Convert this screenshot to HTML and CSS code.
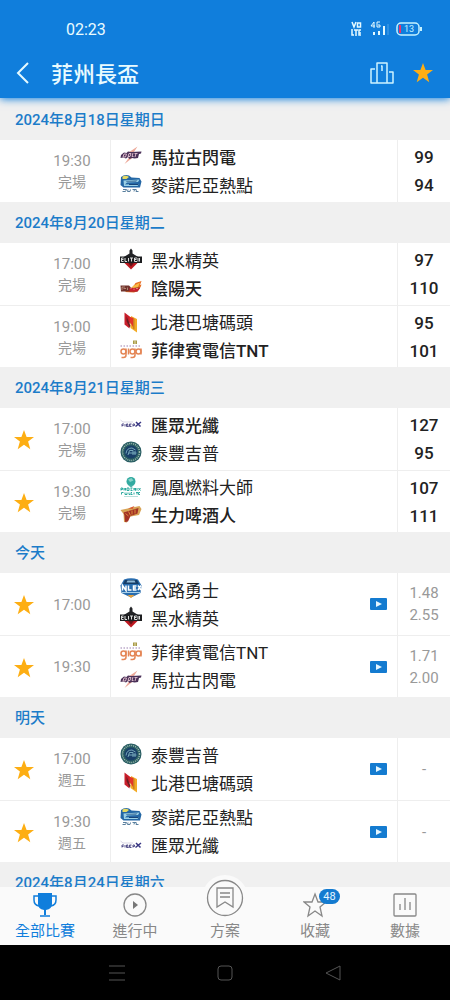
FILE: index.html
```html
<!DOCTYPE html>
<html lang="zh-Hant">
<head>
<meta charset="utf-8">
<meta name="viewport" content="width=device-width, initial-scale=1">
<title>菲州長盃</title>
<link rel="stylesheet" href="styles.css">
</head>
<body>
<svg class="sprite" aria-hidden="true">
  <symbol id="star" viewBox="0 0 22 22"><path fill="#fdae13" d="M11 1l2.6 7h7.4l-5.9 4.6 2.2 7.6L11 15.8l-6.3 4.4 2.2-7.6L1 8h7.400z"/></symbol>
  <symbol id="play" viewBox="0 0 17 12"><rect width="17" height="12" rx="1" fill="#147bd0"/><path fill="#e4f6ff" d="M6 3l6 3-6 3z"/></symbol>
  <symbol id="bolts" viewBox="0 0 44 44">
    <path fill="#edaa9b" d="M35 3L17 15l5 4-13 19 22-17-5-4z"/>
    <path fill="#4b3158" d="M2 20l6-5 5 1 3-3 6 1 21-1-1 4-4 1-2 8-7 1-5-1-5 2-3-4-4 3-6-2-5 1z"/>
    <path fill="none" stroke="#d9b8c8" stroke-width="2" d="M8 18l-2 6h5l2-6zM18 17h4l-2 6h-4zM26 16l-2 7h3M29 17h6m-3 0l-2 7"/>
  </symbol>
  <symbol id="hot" viewBox="0 0 44 44">
    <path fill="#2467a5" d="M2 8q7-6 16-3l5 4 16 1 4 7-3 12H7l-6-5z"/>
    <path fill="#e5d963" d="M5 7q7-3 13 1l-5 4H5z"/>
    <path fill="#9bd1e6" d="M7 15l32-2-3 5-22 1-4 4 28-1-3 4H8z"/>
    <path fill="#174579" d="M13 16l22-1-3 2H12zM18 22h20l-2 2H18z"/>
    <path fill="none" stroke="#587e9d" stroke-width="2" d="M6 33h7l-2 4H5m11-4l-1 4h5l1-4m4 0h7m-3 0l-1 4m5-4l-1 4h5"/>
  </symbol>
  <symbol id="elite" viewBox="0 0 44 44">
    <path fill="#222326" d="M22 1l3 4v6l13 8H6l13-8V5z"/>
    <path fill="#bd1820" d="M6 27h32L22 43z"/><path fill="#5f1419" d="M14 27h16l-8 10z"/>
    <path fill="#1d1e20" d="M0 17h44v13H0z"/>
    <path stroke="#ddd" stroke-width="2" fill="none" d="M7 20H3v7h4M3 23h4m3-3v7h4m3-7v7m3-7h6m-3 0v7m11-7h-5v7h5m-5-4h4m3-3v7m3-7v7"/>
  </symbol>
  <symbol id="rain" viewBox="0 0 44 44">
    <path fill="#e86c20" d="M16 26q10-2 15-12l12-4-3 8 3-1q-3 13-15 16L10 32z"/>
    <path fill="#f8bb45" d="M26 20l14-7-4 9-13 4z"/>
    <path fill="#71332c" d="M1 19h17l5 5 17-1-5 8H2z"/>
    <path fill="#c91f2b" d="M19 24h21l-5 7H19z"/>
    <path stroke="#f2d8bd" stroke-width="1" fill="none" d="M4 22v6m0-6h6m-3 3h5m3-2v5m5-4h4m4 1v3m4-3h4"/>
  </symbol>
  <symbol id="north" viewBox="0 0 44 44">
    <path fill="#c91e2b" d="M9 3l13 10v13l-3-3v12L9 27z"/>
    <path fill="#f2aa24" d="M22 18V10l12 6v27L21 34V19z"/>
    <path fill="#6b1c22" d="M13 10l8 20-2 3-6-13z"/>
    <path fill="#e3342b" d="M19 12l8 2v20l-8-14z"/><path fill="#c97a20" d="M27 14l2 3v20l-3-2z"/>
  </symbol>
  <symbol id="giga" viewBox="0 0 44 44">
    <path fill="#a79b48" d="M26 3h8v7h-8z"/><path fill="#e6d9ad" d="M29 3h2v7h-2z"/>
    <path stroke="#9b7faf" stroke-width="2" stroke-dasharray="3 3" d="M1 14h42"/>
    <g fill="none" stroke="#e48656" stroke-width="3"><circle cx="7" cy="25" r="5"/><path d="M12 19v13q0 5-5 5H3M17 19v12"/><circle cx="25" cy="25" r="5"/><path d="M30 19v13q0 5-5 5h-4"/><circle cx="37" cy="25" r="5"/><path d="M42 19v12"/></g>
  </symbol>
  <symbol id="fiber" viewBox="0 0 44 44">
    <path fill="none" stroke="#b1accb" stroke-width="1" d="M1 14l5 4h20"/>
    <path fill="none" stroke="#55508b" stroke-width="2" d="M4 27v-5h4m-4 3h3m3-3v5m3 0v-5h3l-1 2 2 3h-4m10-5h-4v5h4m-4-3h3m4 3v-5h3v3h-3"/>
    <path fill="none" stroke="#393784" stroke-width="3" d="M32 18l9 9m1-9l-11 9"/>
  </symbol>
  <symbol id="terra" viewBox="0 0 44 44">
    <circle cx="22" cy="22" r="21" fill="#285c62"/><circle cx="22" cy="22" r="17" fill="none" stroke="#9dbbae" stroke-width="3" stroke-dasharray="2 2"/>
    <circle cx="22" cy="22" r="13" fill="#193f69"/>
    <path fill="none" stroke="#77a9ba" stroke-width="2" d="M12 25q1-11 12-11l7 4M16 28l3-9h7v9m-8-4h15M30 20v8"/>
  </symbol>
  <symbol id="phoenix" viewBox="0 0 44 44">
    <circle cx="22" cy="11" r="9" fill="#32aaa0"/><path fill="#87d2c8" d="M16 7l7-3 4 5-7 3z"/>
    <path fill="none" stroke="#42aea4" stroke-width="2" d="M17 18l5 4 5-4"/>
    <path fill="none" stroke="#2ca99e" stroke-width="2" d="M2 29v-5h3v3H2m6-3v5m0-3h3m0-2v5m3-5v5h4v-5zm7 0h4m-4 2h3m-3 3h4m3 0v-5l3 5v-5m3 0v5m3-5l4 5m0-5l-4 5M3 37v-4h4m3 0v4h4v-4m4 0v4h3m3-4h-2v4h3m3-4v4m4-4h4m-2 0v4m6-4h-3v4h3"/>
    <path stroke="#75bdb5" d="M8 41h28"/>
  </symbol>
  <symbol id="beer" viewBox="0 0 44 44">
    <path fill="#d8a456" d="M1 12l38-8 4 6-5 12-22 4-2 11-6-1-1-16z"/>
    <path fill="#a33226" d="M7 17l30-9-2 11-14 5-5 11-6 1-1-13z"/>
    <path fill="none" stroke="#d88b3b" stroke-width="2" d="M11 19l6 5m0-9l4 8m3-10v8m6-10v8"/>
    <path fill="#d85a32" d="M16 9l13-5-4 6z"/>
  </symbol>
  <symbol id="nlex" viewBox="0 0 44 44">
    <path fill="#286cae" d="M8 3q14-5 28 0l7 12-2 15-19 9-19-9L1 15z"/>
    <path fill="#e6a13d" d="M15 34h14l-7 6z"/><path fill="#163c66" d="M10 4h24l4 8H6z"/>
    <path fill="#8eb8d6" d="M15 5h14l2 4H13z"/>
    <path fill="none" stroke="#fff" stroke-width="3" d="M5 25V15l7 10V15m5 0v9h6m10-8h-6v8h6m-6-4h5m4-5l6 9m0-9l-6 9"/>
    <path stroke="#a7cee7" stroke-width="2" d="M4 29h36"/>
  </symbol>
</svg>
<div class="app">
  <header class="top">
    <div class="status">
      <span class="clock">02:23</span>
      <svg class="status-icons" viewBox="0 0 74 18" fill="none" aria-hidden="true">
        <g stroke="#e5faff" stroke-width="1.500"><path d="M2 2l2 5 2-5"/><rect x="7.500" y="3" width="3" height="4"/><path d="M2 9v6h2M4 10h4m-2 0v6m5-6H9v5h2m-2-2h2"/><path stroke-width="1" d="M24 8V2l-3 4h4m5-4h-3v5h3V5h-2"/></g>
        <path stroke="#e5faff" stroke-width="2" d="M24 12v3m5-4v4m5-9v9"/><path stroke="#4ca2e8" d="M38 4v11"/>
        <rect x="47" y="3" width="22" height="12" rx="4" stroke="#c4f2ff" stroke-width="1.500"/>
        <path stroke="#c4f2ff" stroke-width="2" d="M71 7v4"/><path stroke="#e8316e" stroke-width="2" d="M50 5v8"/>
        <text x="54" y="12" class="digits" font-size="9" fill="#c4f2ff">13</text>
      </svg>
    </div>
    <div class="titlebar">
      <button class="icon-btn back" aria-label="返回"><svg width="14" height="22" viewBox="0 0 14 22"><path d="M12 1L2 11l10 10" fill="none" stroke="#e5faff" stroke-width="2"/></svg></button>
      <h1>菲州長盃</h1>
      <button class="icon-btn" aria-label="排名"><svg width="24" height="22" viewBox="0 0 24 22" fill="none" stroke="#cdf3ff" stroke-width="1.500" stroke-linejoin="round"><path d="M7 21V1h10v20M5 7H1v14h22V10h-4M11 4h1v5"/></svg></button>
      <button class="icon-btn" aria-label="收藏聯賽"><svg width="22" height="22"><use href="#star"/></svg></button>
    </div>
  </header>
  <main class="list">
    <h2>2024年8月18日星期日</h2>
    <article class="match">
      <div class="when"><span></span><p><time>19:30</time><small>完場</small></p></div>
      <div class="teams"><p class="win"><svg><use href="#bolts"/></svg>馬拉古閃電</p><p><svg><use href="#hot"/></svg>麥諾尼亞熱點</p></div>
      <div class="score"><b>99</b><b>94</b></div>
    </article>
    <h2>2024年8月20日星期二</h2>
    <article class="match">
      <div class="when"><span></span><p><time>17:00</time><small>完場</small></p></div>
      <div class="teams"><p><svg><use href="#elite"/></svg>黑水精英</p><p class="win"><svg><use href="#rain"/></svg>陰陽天</p></div>
      <div class="score"><b>97</b><b>110</b></div>
    </article>
    <article class="match">
      <div class="when"><span></span><p><time>19:00</time><small>完場</small></p></div>
      <div class="teams"><p><svg><use href="#north"/></svg>北港巴塘碼頭</p><p class="win"><svg><use href="#giga"/></svg>菲律賓電信TNT</p></div>
      <div class="score"><b>95</b><b>101</b></div>
    </article>
    <h2>2024年8月21日星期三</h2>
    <article class="match">
      <div class="when"><button class="icon-btn" aria-label="取消收藏"><svg width="22" height="22"><use href="#star"/></svg></button><p><time>17:00</time><small>完場</small></p></div>
      <div class="teams"><p class="win"><svg><use href="#fiber"/></svg>匯眾光纖</p><p><svg><use href="#terra"/></svg>泰豐吉普</p></div>
      <div class="score"><b>127</b><b>95</b></div>
    </article>
    <article class="match">
      <div class="when"><button class="icon-btn" aria-label="取消收藏"><svg width="22" height="22"><use href="#star"/></svg></button><p><time>19:30</time><small>完場</small></p></div>
      <div class="teams"><p><svg><use href="#phoenix"/></svg>鳳凰燃料大師</p><p class="win"><svg><use href="#beer"/></svg>生力啤酒人</p></div>
      <div class="score"><b>107</b><b>111</b></div>
    </article>
    <h2>今天</h2>
    <article class="match">
      <div class="when"><button class="icon-btn" aria-label="取消收藏"><svg width="22" height="22"><use href="#star"/></svg></button><p><time>17:00</time></p></div>
      <div class="teams"><p><svg><use href="#nlex"/></svg>公路勇士</p><p><svg><use href="#elite"/></svg>黑水精英</p></div>
      <button class="icon-btn video" aria-label="直播"><svg width="17" height="12"><use href="#play"/></svg></button>
      <div class="score odds"><span>1.48</span><span>2.55</span></div>
    </article>
    <article class="match">
      <div class="when"><button class="icon-btn" aria-label="取消收藏"><svg width="22" height="22"><use href="#star"/></svg></button><p><time>19:30</time></p></div>
      <div class="teams"><p><svg><use href="#giga"/></svg>菲律賓電信TNT</p><p><svg><use href="#bolts"/></svg>馬拉古閃電</p></div>
      <button class="icon-btn video" aria-label="直播"><svg width="17" height="12"><use href="#play"/></svg></button>
      <div class="score odds"><span>1.71</span><span>2.00</span></div>
    </article>
    <h2>明天</h2>
    <article class="match">
      <div class="when"><button class="icon-btn" aria-label="取消收藏"><svg width="22" height="22"><use href="#star"/></svg></button><p><time>17:00</time><small>週五</small></p></div>
      <div class="teams"><p><svg><use href="#terra"/></svg>泰豐吉普</p><p><svg><use href="#north"/></svg>北港巴塘碼頭</p></div>
      <button class="icon-btn video" aria-label="直播"><svg width="17" height="12"><use href="#play"/></svg></button>
      <div class="score odds"><span>-</span></div>
    </article>
    <article class="match">
      <div class="when"><button class="icon-btn" aria-label="取消收藏"><svg width="22" height="22"><use href="#star"/></svg></button><p><time>19:30</time><small>週五</small></p></div>
      <div class="teams"><p><svg><use href="#hot"/></svg>麥諾尼亞熱點</p><p><svg><use href="#fiber"/></svg>匯眾光纖</p></div>
      <button class="icon-btn video" aria-label="直播"><svg width="17" height="12"><use href="#play"/></svg></button>
      <div class="score odds"><span>-</span></div>
    </article>
    <h2>2024年8月24日星期六</h2>
  </main>
  <nav class="tabs">
    <a href="#all" class="on"><svg width="24" height="26" viewBox="0 0 24 26"><path fill="#107edc" d="M5 1h14v11q0 5-6 6v5h-2v-5q-6-1-6-6z"/><path fill="none" stroke="#107edc" stroke-width="1.500" d="M5 4H1v4q0 5 5 6M19 4h4v4q0 5-5 6M7 24h10"/></svg>全部比賽</a>
    <a href="#live"><svg width="24" height="26" viewBox="0 0 24 26"><circle cx="12" cy="13" r="11" fill="none" stroke="#888" stroke-width="1.300"/><path fill="#777" d="M10 9l5 4-5 4z"/></svg>進行中</a>
    <a href="#plans" class="plan"><svg width="46" height="46" viewBox="0 0 46 46"><circle cx="23" cy="23" r="23" fill="#fafafa"/><g fill="none" stroke="#888" stroke-width="1.300"><circle cx="23" cy="23" r="17.500"/><path d="M15 13h16v19l-8-5-8 5zM18 18h10M18 22h10"/></g></svg>方案</a>
    <a href="#saved"><span class="badged"><svg width="24" height="26" viewBox="0 0 24 26"><path fill="none" stroke="#888" stroke-width="1.300" d="M12 2l3 8h8l-6 5 2 9-7-5-7 5 2-9-6-5h8z"/></svg><span class="badge">48</span></span>收藏</a>
    <a href="#stats"><svg width="24" height="26" viewBox="0 0 24 26" fill="none" stroke="#888" stroke-width="1.300"><rect x="1" y="2" width="22" height="22" rx="1"/><path d="M7 12v6m5-12v12m5-8v8"/></svg>數據</a>
  </nav>
  <div class="system">
    <button class="icon-btn" aria-label="選單"><svg width="16" height="16" viewBox="0 0 16 16"><path stroke="#555" d="M0 1h16M0 8h16M0 15h16"/></svg></button>
    <button class="icon-btn" aria-label="主畫面"><svg width="16" height="16" viewBox="0 0 16 16"><rect x="1" y="1" width="14" height="14" rx="3" fill="none" stroke="#555"/></svg></button>
    <button class="icon-btn" aria-label="上一頁"><svg width="16" height="16" viewBox="0 0 16 16"><path fill="none" stroke="#555" d="M15 1v14L1 8z" stroke-linejoin="round"/></svg></button>
  </div>
</div>
</body>
</html>
```
FILE: styles.css
```css
* { box-sizing: border-box; }
body, h1, h2, p { margin: 0; }
body {
  background: #f0f0f0;
  color: #222;
  font-family: Roboto, "Noto Sans CJK TC", sans-serif;
}
svg { display: block; flex: none; }
.sprite { position: absolute; width: 0; height: 0; }
.digits { font-family: Roboto, sans-serif; }
.icon-btn {
  display: flex;
  align-items: center;
  justify-content: center;
  padding: 0;
  border: 0;
  background: none;
}
.app { display: flex; flex-direction: column; height: 100vh; }

.top {
  position: relative;
  background: #107edc;
  color: #e9fbff;
  box-shadow: 0 1px 8px #107edc;
}
.status {
  display: flex;
  align-items: center;
  justify-content: space-between;
  height: 48px;
  padding: 10px 26px 0 66px;
  font-size: 16px;
}
.status-icons { width: 74px; height: 18px; }
.titlebar {
  display: flex;
  align-items: center;
  gap: 18px;
  height: 50px;
  padding: 0 16px;
}
h1 {
  flex: 1;
  padding: 0 0 3px 3px;
  font-size: 22px;
  font-weight: 500;
}

.list { flex: 1; min-height: 0; overflow: hidden; }
h2 {
  height: 41px;
  padding-left: 15px;
  color: #1c7cc9;
  font-size: 15px;
  font-weight: 500;
  line-height: 43px;
}
h2:first-child { height: 42px; line-height: 45px; }
.match { display: flex; height: 62px; background: #fff; }
.match + .match { border-top: 1px solid #eee; }
.when {
  display: grid;
  grid-template-columns: 48px 48px;
  align-items: center;
  width: 111px;
  padding-top: 2px;
  border-right: 1px solid #eee;
  color: #999;
  text-align: center;
}
time, small { display: block; line-height: 21px; }
time { font-size: 15px; }
small { font-size: 14px; }
.teams { flex: 1; align-self: center; padding: 0 0 2px 9px; }
.teams p {
  display: flex;
  align-items: center;
  gap: 9px;
  height: 28px;
  font-size: 17px;
  white-space: nowrap;
}
.teams svg { width: 22px; height: 22px; }
.win { font-weight: 500; }
.video { width: 37px; }
.score {
  display: flex;
  flex-direction: column;
  justify-content: center;
  width: 53px;
  border-left: 1px solid #eee;
  font-size: 17px;
  line-height: 28px;
  text-align: center;
}
.score b { font-weight: 500; }
.odds { color: #999; font-size: 15px; line-height: 22px; }

.tabs {
  position: relative;
  display: grid;
  grid-template-columns: repeat(5, 1fr);
  height: 58px;
  background: #fafafa;
}
.tabs a {
  display: flex;
  flex-direction: column;
  align-items: center;
  justify-content: flex-end;
  gap: 2px;
  padding-bottom: 3px;
  color: #888;
  font-size: 15px;
  line-height: 22px;
  text-decoration: none;
}
.tabs .on { color: #107edc; }
.plan svg { margin: -16px 0 -3px; }
.badged { position: relative; }
.badge {
  position: absolute;
  left: 16px;
  top: -3px;
  width: 21px;
  height: 15px;
  border-radius: 8px;
  background: #147bd0;
  color: #e4f6ff;
  font-size: 11px;
  line-height: 15px;
  text-align: center;
}
.system {
  display: flex;
  align-items: center;
  justify-content: center;
  gap: 92px;
  height: 55px;
  background: #000;
}
```
